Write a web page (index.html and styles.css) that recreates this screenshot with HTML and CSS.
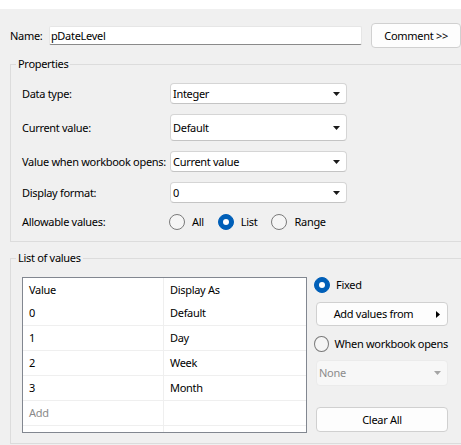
FILE: index.html
```html
<!DOCTYPE html>
<html lang="en">
<head>
    <meta charset="UTF-8">
    <title>Parameter</title>
    <link rel="stylesheet" href="styles.css">
</head>
<body>
    <div class="titlebar"></div>

    <div class="name-row">
        <label class="name-label">Name:</label>
        <div class="textbox">pDateLevel</div>
        <button class="btn comment-btn">Comment &gt;&gt;</button>
    </div>

    <fieldset class="group">
        <legend>Properties</legend>
        <div class="prop-rows">
            <div class="prop-row">
                <span class="prop-label">Data type:</span>
                <div class="combo"><span>Integer</span><svg class="arrow" width="7" height="4" viewBox="0 0 7 4"><polygon points="0,0 7,0 3.5,4"/></svg></div>
            </div>
            <div class="prop-row">
                <span class="prop-label">Current value:</span>
                <div class="combo tall"><span>Default</span><svg class="arrow" width="7" height="4" viewBox="0 0 7 4"><polygon points="0,0 7,0 3.5,4"/></svg></div>
            </div>
            <div class="prop-row">
                <span class="prop-label">Value when workbook opens:</span>
                <div class="combo"><span>Current value</span><svg class="arrow" width="7" height="4" viewBox="0 0 7 4"><polygon points="0,0 7,0 3.5,4"/></svg></div>
            </div>
            <div class="prop-row">
                <span class="prop-label">Display format:</span>
                <div class="combo"><span>0</span><svg class="arrow" width="7" height="4" viewBox="0 0 7 4"><polygon points="0,0 7,0 3.5,4"/></svg></div>
            </div>
            <div class="prop-row">
                <span class="prop-label">Allowable values:</span>
                <div class="radio-group">
                    <label class="radio"><span class="dot"></span>All</label>
                    <label class="radio"><span class="dot checked"></span>List</label>
                    <label class="radio"><span class="dot"></span>Range</label>
                </div>
            </div>
        </div>
    </fieldset>

    <fieldset class="group lov">
        <legend>List of values</legend>
        <div class="lov-body">
            <div class="values-table">
                <div class="vt-row vt-head"><div class="vt-cell">Value</div><div class="vt-cell">Display As</div></div>
                <div class="vt-row"><div class="vt-cell">0</div><div class="vt-cell">Default</div></div>
                <div class="vt-row"><div class="vt-cell">1</div><div class="vt-cell">Day</div></div>
                <div class="vt-row"><div class="vt-cell">2</div><div class="vt-cell">Week</div></div>
                <div class="vt-row"><div class="vt-cell">3</div><div class="vt-cell">Month</div></div>
                <div class="vt-row"><div class="vt-cell placeholder">Add</div><div class="vt-cell"></div></div>
                <div class="vt-row vt-fill"><div class="vt-cell"></div><div class="vt-cell"></div></div>
            </div>

            <div class="lov-side">
                <label class="radio"><span class="dot checked"></span>Fixed</label>
                <button class="btn menu-btn">
                    <span class="menu-text">Add values from</span>
                    <svg class="arrow-right" width="4" height="7" viewBox="0 0 4 7"><polygon points="0,0 4,3.5 0,7"/></svg>
                </button>
                <label class="radio opens"><span class="dot"></span>When workbook opens</label>
                <div class="combo disabled"><span>None</span><svg class="arrow" width="7" height="4" viewBox="0 0 7 4"><polygon points="0,0 7,0 3.5,4"/></svg></div>
                <button class="btn clear-btn">Clear All</button>
            </div>
        </div>
    </fieldset>
</body>
</html>
```

FILE: styles.css
```css
:root {
    --win-bg: #F0F0F0;
    --win-text: #000000;
    --win-group-border: #DCDCDC;
    --win-control-border: #D5D5D5;
    --win-accent: #005FB8;
    --win-grid-line: #EFEFEF;
}

html, body {
    margin: 0;
    padding: 0;
}

body {
    width: 461px;
    height: 445px;
    overflow: hidden;
    background: var(--win-bg);
    color: var(--win-text);
    font-family: "Noto Sans", "Open Sans", sans-serif;
    font-size: 11px;
    line-height: 16px;
    letter-spacing: -0.3px;
    white-space: nowrap;
}

.titlebar {
    height: 9px;
    background: #FFFFFF;
}

.name-row {
    display: flex;
    align-items: center;
    padding: 14px 0 0 10px;
    height: 25px;
}

.name-label {
    width: 39px;
}

.textbox {
    width: 310px;
    height: 17px;
    line-height: 17px;
    padding: 0 1px;
    background: #FFFFFF;
    border: 1px solid #E6E6E6;
    border-bottom-color: #8A8A8A;
    border-radius: 2px;
}

.btn {
    font: inherit;
    letter-spacing: inherit;
    color: var(--win-text);
    background: #FDFDFD;
    border: 1px solid #D0D0D0;
    border-radius: 4px;
    padding: 0;
    cursor: pointer;
}

.comment-btn {
    margin-left: 9px;
    width: 90px;
    height: 25px;
}

.group {
    box-sizing: border-box;
    margin: 8px 0 0 10px;
    padding: 0;
    width: 451px;
    border: 1px solid var(--win-group-border);
    border-right: none;
    min-inline-size: 0;
}

.group legend {
    margin-left: 5px;
    padding: 0 2px;
    line-height: 16px;
}

.lov {
    margin-top: 8px;
}

.prop-rows {
    display: flex;
    flex-direction: column;
    gap: 10px;
    padding: 11px 0 10px 11px;
}

.prop-row {
    display: flex;
    align-items: center;
}

.prop-label {
    width: 148px;
}

.combo {
    display: flex;
    align-items: center;
    justify-content: space-between;
    box-sizing: border-box;
    width: 177px;
    height: 21px;
    padding: 0 6px 0 2px;
    background: #FFFFFF;
    border: 1px solid var(--win-control-border);
    border-bottom-color: #C4C4C4;
    border-radius: 4px;
}

.combo.tall {
    height: 27px;
}

.combo .arrow {
    fill: #1A1A1A;
}

.combo.disabled {
    width: 132px;
    height: 26px;
    margin-top: 8px;
    background: #F7F7F7;
    border-color: #EBEBEB;
    color: #8B8B8B;
}

.combo.disabled .arrow {
    fill: #A5A5A5;
}

.radio-group {
    display: flex;
    gap: 14px;
    margin-left: -1px;
    height: 18px;
    align-items: center;
}

.radio {
    display: flex;
    align-items: center;
    gap: 7px;
    height: 16px;
}

.dot {
    position: relative;
    box-sizing: border-box;
    width: 16px;
    height: 16px;
    border: 1px solid #7A7A7A;
    border-radius: 50%;
    background: #F5F5F5;
}

.dot.checked {
    border-color: var(--win-accent);
    background: var(--win-accent);
}

.dot.checked::after {
    content: "";
    position: absolute;
    left: 4px;
    top: 4px;
    width: 6px;
    height: 6px;
    border-radius: 50%;
    background: #FFFFFF;
}

.lov-body {
    display: flex;
    gap: 9px;
    padding: 11px 0 10px 11px;
}

.values-table {
    width: 283px;
    height: 154px;
    border: 1px solid #828790;
    background: #FFFFFF;
    display: flex;
    flex-direction: column;
}

.vt-row {
    display: grid;
    grid-template-columns: 141px 1fr;
    height: 24px;
    border-bottom: 1px solid var(--win-grid-line);
}

.vt-head {
    height: 23px;
    border-bottom: none;
}

.vt-fill {
    flex: 1;
    border-bottom: none;
}

.vt-cell {
    display: flex;
    align-items: center;
    padding-left: 6px;
    border-right: 1px solid var(--win-grid-line);
}

.vt-cell:last-child {
    border-right: none;
}

.placeholder {
    color: #8A8A8A;
}

.lov-side {
    display: flex;
    flex-direction: column;
    width: 132px;
}

.lov-side .radio {
    margin-left: -2px;
    gap: 6px;
}

.menu-btn {
    display: flex;
    align-items: center;
    margin-top: 9px;
    width: 132px;
    height: 24px;
}

.menu-text {
    flex: 1;
    text-align: center;
}

.arrow-right {
    margin: 0 7px 0 6px;
    fill: #000000;
}

.lov-side .opens {
    margin-top: 10px;
}

.clear-btn {
    margin-top: 21px;
    width: 132px;
    height: 25px;
}
```
